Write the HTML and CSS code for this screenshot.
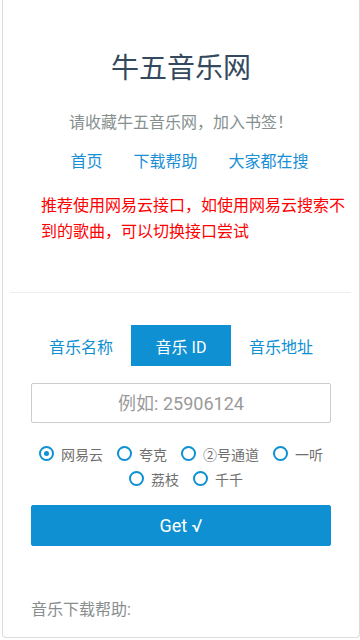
FILE: index.html
```html
<!DOCTYPE html>
<html lang="zh-CN">
<head>
<meta charset="utf-8">
<meta name="viewport" content="width=device-width, initial-scale=1">
<title>牛五音乐网</title>
<link rel="stylesheet" href="styles.css">
</head>
<body>
<div class="card">
  <header class="hero">
    <h1 class="title">牛五音乐网</h1>
    <p class="subtitle">请收藏牛五音乐网，加入书签！</p>
    <nav class="nav">
      <a class="nav-link" href="#">首页</a>
      <a class="nav-link" href="#">下载帮助</a>
      <a class="nav-link" href="#">大家都在搜</a>
    </nav>
    <p class="notice">推荐使用网易云接口，如使用网易云搜索不到的歌曲，可以切换接口尝试</p>
  </header>
  <hr class="divider">
  <main class="panel">
    <div class="tabs">
      <span class="tab">音乐名称</span>
      <span class="tab active">音乐 ID</span>
      <span class="tab">音乐地址</span>
    </div>
    <input class="field" type="text" placeholder="例如: 25906124">
    <div class="sources">
      <div class="source-row">
        <label class="source"><span class="radio checked"></span>网易云</label>
        <label class="source"><span class="radio"></span>夸克</label>
        <label class="source"><span class="radio"></span>②号通道</label>
        <label class="source"><span class="radio"></span>一听</label>
      </div>
      <div class="source-row second">
        <label class="source"><span class="radio"></span>荔枝</label>
        <label class="source"><span class="radio"></span>千千</label>
      </div>
    </div>
    <button class="get" type="button">Get √</button>
    <p class="help">音乐下载帮助:</p>
  </main>
</div>
</body>
</html>
```
FILE: styles.css
```css
* { box-sizing: border-box; }

html, body {
  margin: 0;
  padding: 0;
  background: #fff;
  font-family: Roboto, "Noto Sans CJK SC", sans-serif;
}

.card {
  margin-left: 2px;
  width: 358px;
  border: 1px solid #dcdcdc;
  border-top: 0;
  border-radius: 0 0 4px 4px;
  background: #fff;
}

.hero {
  padding-top: 52px;
  text-align: center;
}

.title {
  margin: 0;
  font-size: 28px;
  line-height: 34px;
  font-weight: 400;
  color: #34495e;
}

.subtitle {
  margin: 25px 0 0;
  font-size: 16px;
  line-height: 24px;
  color: #86908f;
}

.nav {
  margin-top: 15px;
  padding-left: 17px;
  display: flex;
  justify-content: center;
  gap: 31px;
  line-height: 24px;
}

.nav-link {
  font-size: 16px;
  color: #1a8fd5;
  text-decoration: none;
}

.notice {
  margin: 19px 8px 0 38px;
  text-align: left;
  font-size: 16px;
  line-height: 26px;
  color: #ff0000;
}

.divider {
  margin: 47px 8px 0 7px;
  height: 0;
  border: 0;
  border-top: 1px solid #eeeeee;
}

.panel {
  width: 300px;
  margin: 0 auto;
  padding: 32px 0 15px;
}

.tabs {
  display: flex;
  height: 41px;
}

.tab {
  flex: 1;
  display: flex;
  align-items: center;
  justify-content: center;
  font-size: 16px;
  color: #0e90d2;
}

.tab.active {
  background: #0e90d2;
  color: #fff;
}

.field {
  display: block;
  width: 100%;
  height: 40px;
  margin-top: 17px;
  border: 1px solid #cccccc;
  border-radius: 2px;
  padding: 0 10px;
  font-family: Roboto, "Noto Sans CJK SC", sans-serif;
  font-size: 18px;
  text-align: center;
  color: #555;
  background: #fff;
  outline: none;
}

.field::placeholder {
  color: #9a9a9a;
}

.sources {
  margin-top: 18px;
}

.source-row {
  display: flex;
  justify-content: center;
  gap: 14px;
  height: 25px;
  align-items: center;
}

.source-row.second {
  padding-left: 10px;
}

.source {
  display: inline-flex;
  align-items: center;
  gap: 7px;
  font-size: 14px;
  color: #6f6f6f;
}

.radio {
  width: 15px;
  height: 15px;
  border: 2px solid #0e90d2;
  border-radius: 50%;
  display: inline-flex;
  align-items: center;
  justify-content: center;
  flex: none;
}

.radio.checked::after {
  content: "";
  width: 5px;
  height: 5px;
  border-radius: 50%;
  background: #0e90d2;
}

.get {
  display: block;
  width: 100%;
  height: 41px;
  margin-top: 14px;
  border: 1px solid #0e90d2;
  border-radius: 2px;
  background: #0e90d2;
  color: #fff;
  font-family: Roboto, "Noto Sans CJK SC", sans-serif;
  font-size: 18px;
  padding: 0;
}

.help {
  margin: 52px 0 0;
  font-size: 16px;
  line-height: 24px;
  color: #888e8e;
}
```
